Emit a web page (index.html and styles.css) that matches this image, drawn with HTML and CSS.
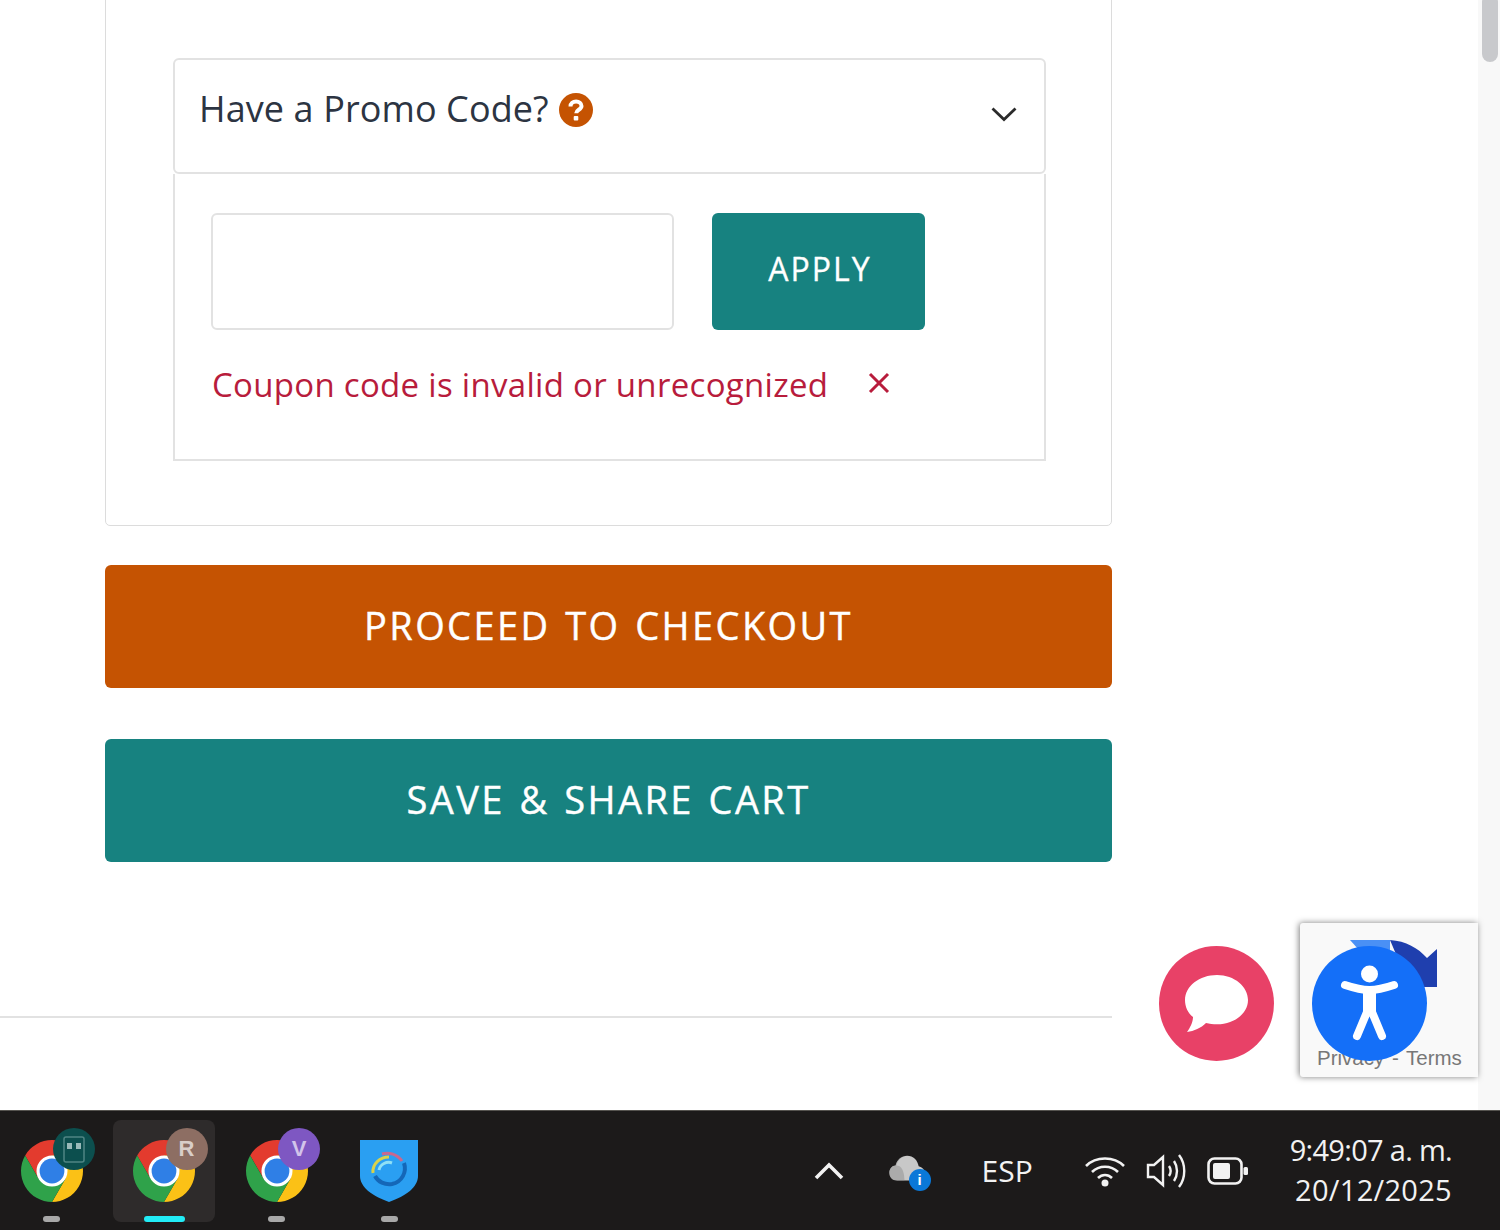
FILE: index.html
```html
<!DOCTYPE html>
<html lang="en">
<head>
<meta charset="utf-8">
<title>Cart</title>
<link rel="stylesheet" href="styles.css">
</head>
<body>
<svg class="defs" width="0" height="0" aria-hidden="true">
  <symbol id="chrome" viewBox="0 0 100 100">
    <path fill="#e33b2e" d="M50 50L28.350 62.500L6.700 25A50 50 0 0 1 93.300 25L50 25Z"/>
    <path fill="#fbc116" d="M50 50L50 25L93.300 25A50 50 0 0 1 50 100L71.650 62.500Z"/>
    <path fill="#2fa24a" d="M50 50L71.650 62.500L50 100A50 50 0 0 1 6.700 25L28.350 62.500Z"/>
    <circle cx="50" cy="50" r="25" fill="#fff"/>
    <circle cx="50" cy="50" r="20" fill="#2f7fe6"/>
  </symbol>
</svg>

<div class="viewport">
  <main class="page">
    <section class="card">
      <div class="promo-head">
        <span class="promo-title">Have a Promo Code?</span>
        <svg class="help" viewBox="0 0 34 34" aria-hidden="true">
          <circle cx="17" cy="17" r="17" fill="#c55302"/>
          <path d="M11.500 13.500c0-3.200 2.500-5 5.600-5 3 0 5.400 1.800 5.400 4.500 0 3.800-5.300 3.700-5.300 7.200" fill="none" stroke="#fff" stroke-width="4"/>
          <rect x="14.700" y="23" width="4.600" height="4.600" rx="1" fill="#fff"/>
        </svg>
        <svg class="chevron" viewBox="0 0 26 16" aria-hidden="true"><path d="M1.500 2.500L13 13.500L24.500 2.500" fill="none" stroke="#2b2b2b" stroke-width="2.800"/></svg>
      </div>
      <div class="promo-body">
        <div class="promo-form">
          <input class="promo-input" type="text" aria-label="Promo code">
          <button class="btn-apply" type="button">APPLY</button>
        </div>
        <div class="promo-error">
          <span>Coupon code is invalid or unrecognized</span>
          <svg class="error-x" viewBox="0 0 22 22" aria-hidden="true"><path d="M2 2L20 20M20 2L2 20" stroke="#b81c3c" stroke-width="3" fill="none"/></svg>
        </div>
      </div>
    </section>
    <button class="btn-wide btn-orange" type="button">PROCEED TO CHECKOUT</button>
    <button class="btn-wide btn-teal" type="button">SAVE &amp; SHARE CART</button>
    <hr class="rule">
  </main>
  <div class="scrollbar"><div class="thumb"></div></div>

  <button class="fab fab-chat" type="button" aria-label="Chat">
    <svg viewBox="0 0 115 115" aria-hidden="true">
      <path fill="#fff" d="M58 29c-17.500 0-32 11-32 25 0 7 3 13 8 17 0 5-3 11-6 15 7-1 14-4 19-9 3.500.7 7 1.300 11 1.300 17.500 0 31-11 31-24.300S75.500 29 58 29z"/>
    </svg>
  </button>

  <div class="recaptcha">
    <svg class="recaptcha-arrow" viewBox="0 0 100 70" aria-hidden="true">
      <path fill="#4a90f5" d="M12 1h40v20H30z"/>
      <path fill="#1f3fae" d="M52 1c16 1 28 8 37 18l10-9v38H60V20z"/>
    </svg>
    <div class="recaptcha-links">Privacy - Terms</div>
  </div>

  <button class="fab fab-access" type="button" aria-label="Accessibility">
    <svg viewBox="0 0 115 115" aria-hidden="true">
      <circle cx="57.500" cy="28" r="8.500" fill="#fff"/>
      <path d="M33 39C42 42 50 44 57.500 44S73 42 82 39" fill="none" stroke="#fff" stroke-width="8" stroke-linecap="round"/>
      <path d="M51 44H64V68H51z" fill="#fff"/>
      <path d="M55 66L45 90M60 66L70 90" fill="none" stroke="#fff" stroke-width="8" stroke-linecap="round"/>
    </svg>
  </button>
</div>

<footer class="taskbar">
  <div class="apps">
    <div class="app">
      <div class="app-icon">
        <svg class="chrome-svg"><use href="#chrome"/></svg>
        <span class="badge badge-teal">
          <svg viewBox="0 0 42 42" aria-hidden="true"><rect x="11" y="9" width="20" height="25" rx="2" fill="none" stroke="#4f8584" stroke-width="1.500"/><rect x="14" y="15" width="5" height="6" fill="#9ab9b8"/><rect x="23" y="15" width="5" height="6" fill="#9ab9b8"/></svg>
        </span>
      </div>
      <span class="pip"></span>
    </div>
    <div class="app app-active">
      <div class="app-icon">
        <svg class="chrome-svg"><use href="#chrome"/></svg>
        <span class="badge badge-r">R</span>
      </div>
      <span class="pip pip-active"></span>
    </div>
    <div class="app">
      <div class="app-icon">
        <svg class="chrome-svg"><use href="#chrome"/></svg>
        <span class="badge badge-v">V</span>
      </div>
      <span class="pip"></span>
    </div>
    <div class="app">
      <div class="app-icon">
        <svg class="shield" viewBox="0 0 58 62" aria-hidden="true">
          <path fill="#2a9ff2" d="M0 0h58v36c0 11-12 20-29 26C12 56 0 47 0 36z"/>
          <g fill="none" transform="translate(0 3)">
            <path d="M44 20c3 9-2 19-12 21-7 1-14-2-17-8" stroke="#1467b8" stroke-width="4"/>
            <path d="M13 30c-1-9 7-16 16-16" stroke="#d9d24a" stroke-width="3"/>
            <path d="M22 11c7-2 15 0 20 7" stroke="#c9688f" stroke-width="3"/>
            <path d="M19 27c1-6 8-9 13-7" stroke="#8fe0f5" stroke-width="3"/>
          </g>
        </svg>
      </div>
      <span class="pip"></span>
    </div>
  </div>
  <div class="tray">
    <svg class="tray-chevron" viewBox="0 0 30 18" aria-hidden="true"><path d="M2 16L15 3L28 16" fill="none" stroke="#f2f2f2" stroke-width="3.600"/></svg>
    <div class="tray-cloud">
      <svg viewBox="0 0 42 36" aria-hidden="true"><path fill="#c8c8c8" d="M9 31C3 31 0 27 0 22c0-4 3-8 7-8 2-7 7-11 13-11 7 0 12 5 13 12 4 1 7 4 7 8 0 5-3 8-8 8z"/><path fill="#8e8e8e" d="M20 3c-5 0-10 4-12 11 5 0 9 5 9 17H9C3 31 0 27 0 22c0-4 3-8 7-8 2-7 7-11 13-11z" opacity=".5"/></svg>
      <span class="cloud-info">i</span>
    </div>
    <span class="tray-lang">ESP</span>
    <svg class="tray-wifi" viewBox="0 0 42 34" aria-hidden="true"><g fill="none" stroke="#f2f2f2" stroke-width="2.600"><path d="M2 12C12 2 30 2 40 12"/><path d="M8 18C15 11 27 11 34 18"/><path d="M14 24C18 20 24 20 28 24"/></g><circle cx="21" cy="29" r="3.500" fill="#f2f2f2"/></svg>
    <svg class="tray-speaker" viewBox="0 0 42 36" aria-hidden="true"><g fill="none" stroke="#f2f2f2" stroke-width="2.400"><path d="M2 12h6L17 4v28L8 24H2z"/><path d="M23 13c2 3 2 7 0 10"/><path d="M28 8c4 6 4 14 0 20"/><path d="M33 2c7 9 7 23 0 32"/></g></svg>
    <svg class="tray-battery" viewBox="0 0 42 28" aria-hidden="true"><rect x="1.500" y="1.500" width="33" height="25" rx="6" fill="none" stroke="#f2f2f2" stroke-width="2.600"/><rect x="6" y="6" width="17" height="16" rx="2" fill="#f2f2f2"/><rect x="36.500" y="10" width="4.500" height="8" rx="1.500" fill="#f2f2f2"/></svg>
    <div class="clock">
      <span class="clock-time">9:49:07 a. m.</span>
      <span class="clock-date">20/12/2025</span>
    </div>
  </div>
</footer>
</body>
</html>
```
FILE: styles.css
```css
* { box-sizing: border-box; }
html, body { margin: 0; padding: 0; }
body {
  width: 1500px;
  height: 1230px;
  overflow: hidden;
  display: flex;
  flex-direction: column;
  background: #fff;
  font-family: "Open Sans", sans-serif;
}
.defs { position: absolute; }
.viewport {
  position: relative;
  flex: none;
  height: 1110px;
  display: flex;
  overflow: hidden;
}
.page { flex: 1; min-width: 0; display: flex; flex-direction: column; }
.scrollbar { flex: none; width: 22px; background: #f8f8f8; padding: 0 1px 0 4px; }
.thumb { height: 68px; margin-top: -6px; width: 16px; border-radius: 8px; background: #c8c9cc; }

.card {
  margin: -12px 0 0 105px;
  width: 1007px;
  height: 538px;
  padding: 69px 65px 0 67px;
  border: 1px solid #dcdcdc;
  border-radius: 5px;
}
.promo-head {
  height: 116px;
  display: flex;
  align-items: flex-start;
  padding: 27px 27px 0 24px;
  border: 2px solid #e2e2e2;
  border-radius: 6px;
}
.promo-title { font-size: 36px; line-height: 44px; color: #2c3442; letter-spacing: .1px; }
.help { width: 34px; height: 34px; margin: 6px 0 0 10px; }
.chevron { width: 26px; height: 16px; margin: 19px 0 0 auto; }
.promo-body {
  height: 287px;
  padding: 39px 0 0 36px;
  border: 2px solid #e2e2e2;
  border-top: 0;
}
.promo-form { display: flex; gap: 38px; }
.promo-input {
  width: 463px;
  height: 117px;
  border: 2px solid #e2e2e2;
  border-radius: 6px;
  background: #fff;
}
.btn-apply {
  width: 213px;
  height: 117px;
  padding: 0 0 7px 3px;
  border: 0;
  border-radius: 6px;
  background: #178280;
  color: #fff;
  font: 32px "Open Sans", sans-serif;
  letter-spacing: 2px;
  -webkit-text-stroke: .3px #fff;
}
.promo-error {
  display: flex;
  align-items: flex-start;
  margin: 33px 0 0 1px;
  color: #b81c3c;
  font-size: 33px;
  line-height: 44px;
  letter-spacing: .3px;
}
.error-x { width: 22px; height: 22px; margin: 9px 0 0 40px; }

.btn-wide {
  margin-left: 105px;
  width: 1007px;
  height: 123px;
  padding: 0 0 3px;
  border: 0;
  border-radius: 6px;
  color: #fff;
  font: 38px "Open Sans", sans-serif;
  letter-spacing: 2.400px;
  word-spacing: 2.500px;
  -webkit-text-stroke: .4px #fff;
}
.btn-orange { margin-top: 39px; background: #c55302; }
.btn-teal { margin-top: 51px; background: #178280; }
.rule {
  margin: 154px 0 0;
  width: 1112px;
  height: 0;
  border: 0;
  border-top: 2px solid #e2e2e2;
}

.fab {
  position: absolute;
  top: 946px;
  width: 115px;
  height: 115px;
  padding: 0;
  border: 0;
  border-radius: 50%;
}
.fab svg { display: block; width: 115px; height: 115px; }
.fab-chat { left: 1159px; background: #e84167; }
.fab-access { left: 1312px; background: #146ff8; }
.recaptcha {
  position: absolute;
  left: 1300px;
  top: 923px;
  width: 178px;
  height: 154px;
  background: #f9f9f9;
  box-shadow: -1px 0 6px rgba(0,0,0,.5);
  border-radius: 3px 0 0 3px;
}
.recaptcha-arrow { position: absolute; left: 38px; top: 16px; width: 100px; height: 70px; }
.recaptcha-links {
  position: absolute;
  left: 17px;
  top: 123px;
  font: 20.500px/24px "Liberation Sans", sans-serif;
  word-spacing: 2px;
  color: #777;
  white-space: nowrap;
}

.taskbar {
  flex: 1;
  display: flex;
  justify-content: space-between;
  align-items: center;
  background: #1c1a1a;
  border-top: 1px solid #55534f;
}
.apps { display: flex; gap: 10.500px; padding-left: .5px; }
.app {
  position: relative;
  width: 102px;
  height: 102px;
  display: flex;
  flex-direction: column;
  align-items: center;
  border-radius: 8px;
}
.app-active { background: #2e2b2b; }
.app-icon { position: relative; width: 62px; height: 62px; margin-top: 20px; }
.chrome-svg { display: block; width: 62px; height: 62px; }
.shield { display: block; width: 58px; height: 62px; margin: 0 auto; }
.badge {
  position: absolute;
  right: -12.500px;
  top: -12px;
  width: 42px;
  height: 42px;
  border-radius: 50%;
  display: flex;
  align-items: center;
  justify-content: center;
  font: bold 22px "Liberation Sans", sans-serif;
}
.badge svg { display: block; width: 42px; height: 42px; }
.badge-teal { background: #0c4f4e; }
.badge-r { background: #8d6e63; color: #d9cdc8; }
.badge-v { background: #7e57c2; color: #d2c3ea; }
.pip {
  margin-top: 14px;
  width: 17px;
  height: 8px;
  border-radius: 4px;
  background: #a8a8a8;
}
.pip-active { width: 41px; background: #22ecf6; }

.tray { display: flex; align-items: center; padding-right: 48px; color: #f2f2f2; }
.tray-chevron { width: 30px; height: 18px; }
.tray-cloud { position: relative; width: 42px; height: 36px; margin-left: 45px; }
.tray-cloud svg { display: block; width: 38px; height: 32px; }
.cloud-info {
  position: absolute;
  left: 20px;
  top: 16px;
  width: 22px;
  height: 22px;
  border-radius: 50%;
  background: #0a78d8;
  color: #fff;
  font: bold 15px/22px "Liberation Sans", sans-serif;
  text-align: center;
}
.tray-lang { margin-left: 51px; font-size: 30px; line-height: 40px; }
.tray-wifi { width: 42px; height: 34px; margin-left: 51px; }
.tray-speaker { width: 42px; height: 36px; margin-left: 20px; }
.tray-battery { width: 42px; height: 28px; margin-left: 19px; }
.clock {
  display: flex;
  flex-direction: column;
  align-items: flex-end;
  margin: -2px 0 0 41px;
  font-size: 29px;
  line-height: 40px;
  white-space: nowrap;
}
.clock-time { letter-spacing: -.7px; }
.clock-date { letter-spacing: .3px; }
```
